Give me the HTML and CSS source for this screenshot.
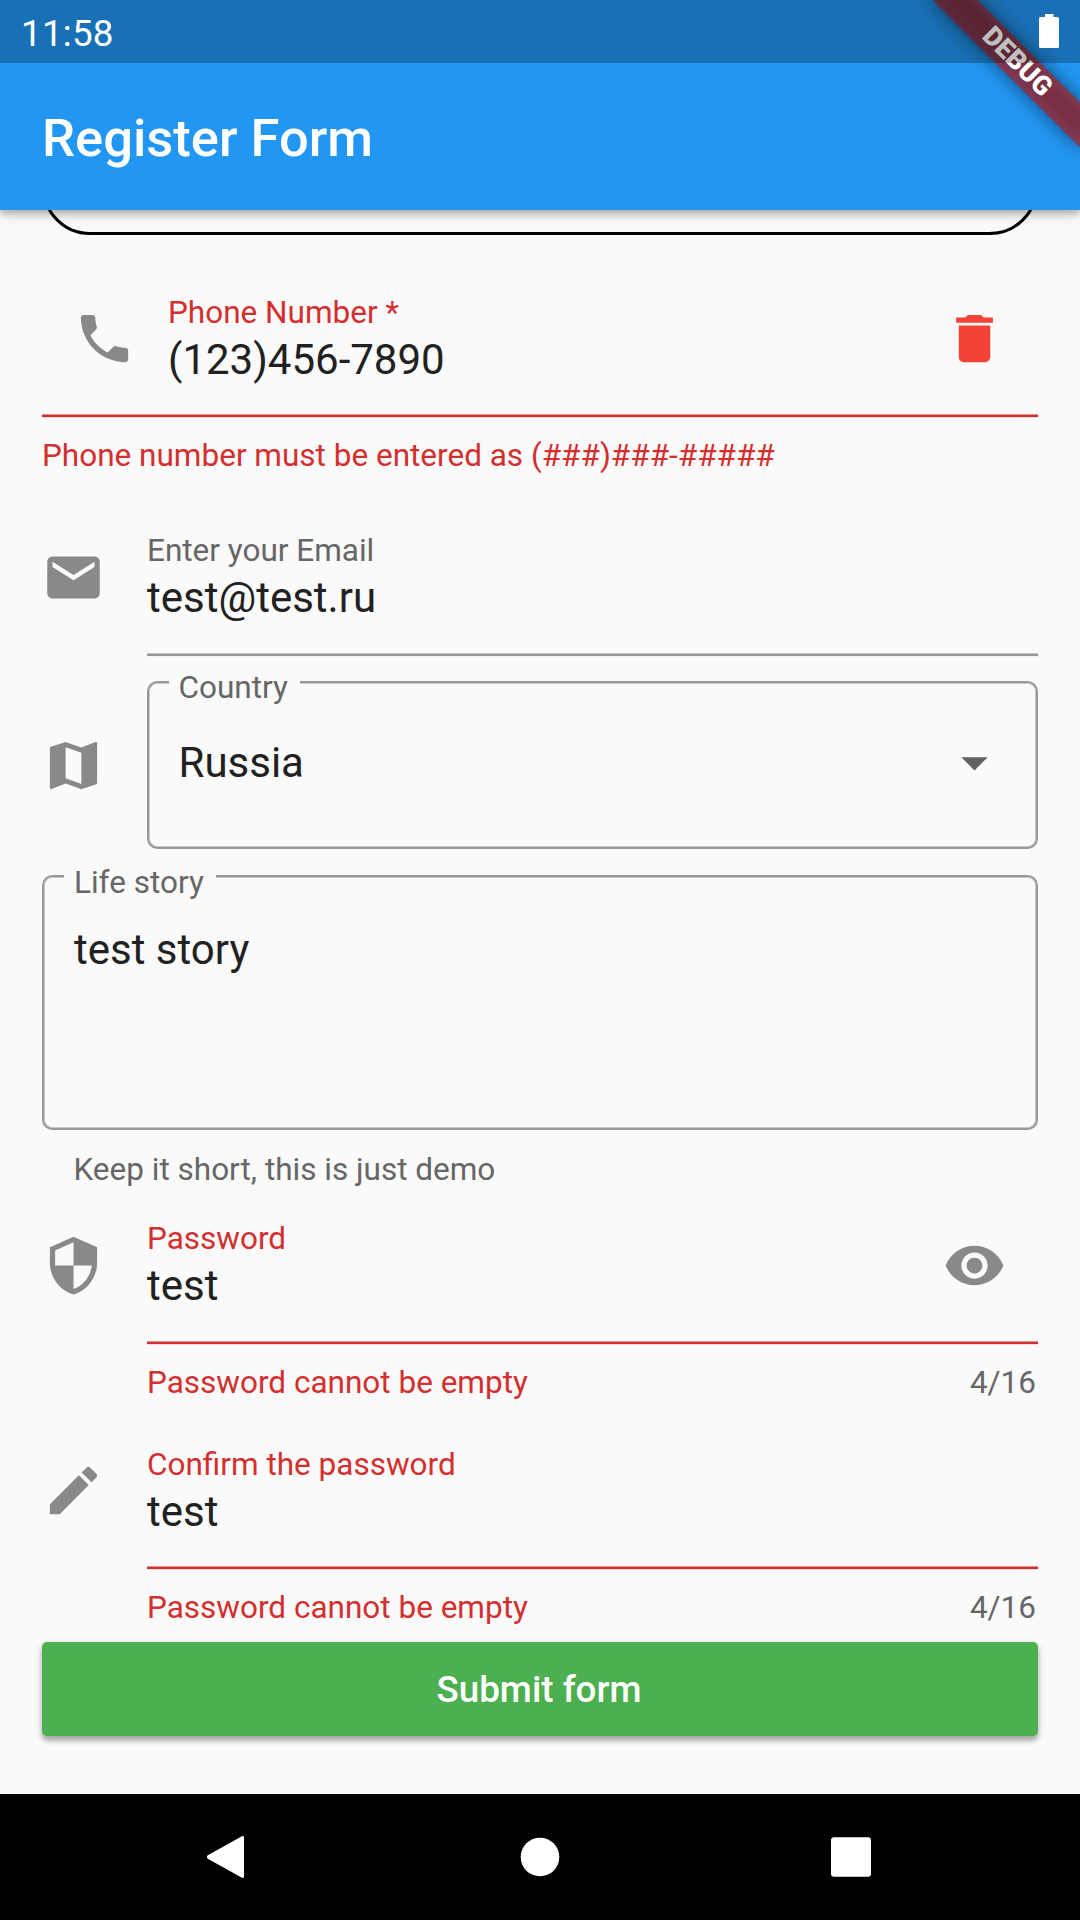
FILE: index.html
```html
<!DOCTYPE html>
<html lang="en">
<head>
<meta charset="utf-8">
<title>Register Form</title>
<link rel="stylesheet" href="styles.css">
</head>
<body>
<div class="screen">
  <header class="app-bar">
    <h1 class="app-title">Register Form</h1>
    <div class="banner-clip"><div class="banner"><span class="banner-text">DEBUG</span></div></div>
    <div class="status-bar">
      <span class="clock">11:58</span>
      <svg class="battery" viewBox="0 0 20 34"><path d="M6 0h8.500v3H18.500a1.500 1.500 0 0 1 1.500 1.500V32.500a1.500 1.500 0 0 1-1.500 1.500H1.500A1.500 1.500 0 0 1 0 32.500V4.500A1.500 1.500 0 0 1 1.500 3H6z"/></svg>
    </div>
  </header>

  <main class="form">
    <div class="rounded-field"></div>

    <section class="field phone error">
      <div class="row">
        <svg class="icon" viewBox="0 0 24 24"><path d="M6.620 10.790c1.440 2.830 3.760 5.140 6.590 6.590l2.200-2.200c.27-.27.67-.36 1.020-.24 1.120.37 2.330.57 3.570.57.55 0 1 .45 1 1V20c0 .55-.45 1-1 1-9.390 0-17-7.610-17-17 0-.55.45-1 1-1h3.500c.55 0 1 .45 1 1 0 1.250.2 2.450.57 3.570.11.35.03.74-.25 1.020l-2.200 2.200z"/></svg>
        <div class="texts"><div class="label">Phone Number *</div><div class="value">(123)456-7890</div></div>
        <svg class="icon delete" viewBox="0 0 24 24"><path d="M6 19c0 1.100.9 2 2 2h8c1.100 0 2-.9 2-2V7H6v12zM19 4h-3.500l-1-1h-5l-1 1H5v2h14V4z"/></svg>
      </div>
      <div class="underline"></div>
      <div class="support"><span>Phone number must be entered as (###)###-#####</span></div>
    </section>

    <section class="with-icon email">
      <svg class="icon" viewBox="0 0 24 24"><path d="M20 4H4c-1.100 0-1.990.9-1.990 2L2 18c0 1.100.9 2 2 2h16c1.100 0 2-.9 2-2V6c0-1.100-.9-2-2-2zm0 4l-8 5-8-5V6l8 5 8-5v2z"/></svg>
      <div class="field">
        <div class="row"><div class="texts"><div class="label">Enter your Email</div><div class="value">test@test.ru</div></div></div>
        <div class="underline"></div>
      </div>
    </section>

    <section class="with-icon country">
      <svg class="icon" viewBox="0 0 24 24"><path d="M20.500 3l-.16.03L15 5.100 9 3 3.360 4.900c-.21.07-.36.25-.36.48V20.500c0 .28.22.5.5.5l.16-.03L9 18.900l6 2.100 5.640-1.900c.21-.07.36-.25.36-.48V3.500c0-.28-.22-.5-.5-.5zM15 19l-6-2.110V5l6 2.110V19z"/></svg>
      <div class="outline select">
        <div class="label notch">Country</div>
        <div class="value">Russia</div>
        <svg class="icon arrow" viewBox="0 0 24 24"><path d="M7 10l5 5 5-5z"/></svg>
      </div>
    </section>

    <section class="story">
      <div class="outline area"><div class="label notch">Life story</div><div class="value">test story</div></div>
      <div class="helper">Keep it short, this is just demo</div>
    </section>

    <section class="with-icon password">
      <svg class="icon" viewBox="0 0 24 24"><path d="M12 1L3 5v6c0 5.550 3.840 10.740 9 12 5.160-1.260 9-6.450 9-12V5l-9-4zm0 10.990h7c-.53 4.120-3.280 7.790-7 8.940V12H5V6.300l7-3.110v8.800z"/></svg>
      <div class="field error">
        <div class="row">
          <div class="texts"><div class="label">Password</div><div class="value">test</div></div>
          <svg class="icon eye" viewBox="0 0 24 24"><path d="M12 4.500C7 4.500 2.730 7.610 1 12c1.730 4.390 6 7.500 11 7.500s9.270-3.110 11-7.500c-1.730-4.390-6-7.500-11-7.500zM12 17c-2.760 0-5-2.240-5-5s2.240-5 5-5 5 2.240 5 5-2.240 5-5 5zm0-8c-1.660 0-3 1.340-3 3s1.340 3 3 3 3-1.340 3-3-1.340-3-3-3z"/></svg>
        </div>
        <div class="underline"></div>
        <div class="support"><span>Password cannot be empty</span><span class="counter">4/16</span></div>
      </div>
    </section>

    <section class="with-icon confirm">
      <svg class="icon" viewBox="0 0 24 24"><path d="M3 17.250V21h3.750L17.810 9.940l-3.750-3.750L3 17.250zM20.710 7.040c.39-.39.39-1.020 0-1.410l-2.340-2.340c-.39-.39-1.020-.39-1.410 0l-1.830 1.830 3.750 3.750 1.830-1.830z"/></svg>
      <div class="field error">
        <div class="row"><div class="texts"><div class="label">Confirm the password</div><div class="value">test</div></div></div>
        <div class="underline"></div>
        <div class="support"><span>Password cannot be empty</span><span class="counter">4/16</span></div>
      </div>
    </section>

    <button class="submit" type="button">Submit form</button>
  </main>

  <nav class="nav-bar">
    <svg class="nav-icon back" viewBox="0 0 48 48"><path d="M6.800 22.300L40.500 3.400Q43 2.300 43 4.500V43.500Q43 45.700 40.500 44.600L6.800 25.700Q4.800 24 6.800 22.300z"/></svg>
    <svg class="nav-icon" viewBox="0 0 48 48"><circle cx="24" cy="24" r="19.300"/></svg>
    <svg class="nav-icon" viewBox="0 0 48 48"><rect x="4" y="4.200" width="40" height="39.600" rx="3"/></svg>
  </nav>
</div>
</body>
</html>
```
FILE: styles.css
```css
* { box-sizing: border-box; }

body {
  margin: 0;
  font-family: Roboto, sans-serif;
  color: #212121;
}

.screen {
  display: flex;
  flex-direction: column;
  width: 1080px;
  height: 1920px;
  background: #fafafa;
  overflow: hidden;
}

/* App bar, with the status bar and debug ribbon lying over it */
.app-bar {
  position: relative;
  z-index: 1;
  flex: none;
  height: 210px;
  padding: 65px 42px 0;
  display: flex;
  align-items: center;
  background: #2196f3;
  box-shadow: 0 4px 10px rgba(0, 0, 0, .2), 0 1px 14px rgba(0, 0, 0, .12), 0 3px 6px rgba(0, 0, 0, .1);
}

.app-title {
  margin: 0;
  font-size: 52.5px;
  line-height: 62px;
  font-weight: 500;
  color: #fff;
}

.status-bar {
  position: absolute;
  inset: 0 0 auto;
  height: 63px;
  padding: 0 21px;
  display: flex;
  justify-content: space-between;
  background: rgba(0, 0, 0, .25);
}

.clock {
  padding-top: 12px;
  font-size: 36.75px;
  line-height: 43px;
  letter-spacing: .25px;
  color: #fff;
}

.battery {
  width: 20px;
  height: 34px;
  margin-top: 14px;
  fill: #fff;
}

.banner-clip {
  position: absolute;
  inset: 0;
  overflow: hidden;
}

.banner {
  position: absolute;
  left: 912px;
  top: 46px;
  width: 210px;
  height: 32px;
  transform: rotate(45deg);
}

.banner::before {
  content: "";
  position: absolute;
  inset: 0;
  background: rgba(0, 0, 0, .5);
  filter: blur(9.5px);
}

.banner-text {
  position: absolute;
  inset: 0;
  background: rgba(183, 28, 28, .627);
  color: #fff;
  font-size: 26.78px;
  line-height: 31px;
  font-weight: 900;
  text-align: center;
}

/* Form */
.form {
  flex: 1;
  padding: 0 42px;
}

.rounded-field {
  height: 120px;
  margin-top: -95px;
  border: 3px solid #000;
  border-radius: 48px;
}

.icon {
  flex: none;
  width: 63px;
  height: 63px;
  fill: #898989;
}

.with-icon {
  display: flex;
  gap: 42px;
}

.field { flex: 1; }

.row {
  display: flex;
  height: 121px;
}

.texts { flex: 1; }

.label,
.support,
.helper {
  font-size: 31.5px;
  line-height: 37px;
  color: #666;
}

.value {
  font-size: 42px;
  line-height: 49px;
}

.texts .value { margin-top: 4px; }

.underline {
  height: 4px;
  background: linear-gradient(#c4c4c4 1px, #979797 1px 3px, #f1f1f1 3px);
}

.error .underline {
  background: linear-gradient(#e59494 1px, #d32f2f 1px 3px, #f5dada 3px);
}

.error .label,
.error .support { color: #d32f2f; }

.support {
  display: flex;
  justify-content: space-between;
  margin-top: 19px;
}

.error .support .counter {
  padding-right: 2px;
  color: #666;
}

.phone { margin-top: 59px; }
.phone .row { height: 120px; padding: 0 32px 0 31px; }
.phone .texts { padding-left: 32px; }
.phone .icon { margin-top: 13px; }
.phone .delete { fill: #f44336; }

.email { margin-top: 58px; }
.email > .icon { margin-top: 14px; }

.outline {
  position: relative;
  flex: 1;
  border: 2px solid #989898;
  border-radius: 10.5px;
  box-shadow: inset 0 0 0 1px #c8c8c8;
}

.notch {
  position: absolute;
  left: 20px;
  top: -14px;
  padding: 0 12px 0 9.5px;
  background: #fafafa;
}

.country { margin-top: 24px; }
.country > .icon { margin-top: 53px; }

.select {
  display: flex;
  justify-content: space-between;
  height: 168px;
  padding: 55px 30px 0 29.5px;
}

.select .arrow {
  margin-top: -7px;
  fill: #616161;
}

.story { margin-top: 26px; }

.area {
  height: 255px;
  padding: 48px 30px 0;
}

.area .notch {
  top: -13px;
  padding-left: 10px;
}

.helper {
  margin-top: 21px;
  padding-left: 31.5px;
}

.password { margin-top: 32px; }
.password .icon { margin-top: 14px; }
.password .eye { margin-right: 32px; }

.confirm { margin-top: 45px; }
.confirm .icon { margin-top: 13px; }
.confirm .row { height: 120px; }

.submit {
  display: block;
  width: 100%;
  height: 94px;
  margin-top: 16px;
  padding: 1px 2px 0 0;
  border: 0;
  border-radius: 5px;
  background: #4caf50;
  box-shadow: 0 5px 5px rgba(0, 0, 0, .26), 0 2px 8px rgba(0, 0, 0, .14);
  color: #fff;
  font: 500 36.75px/93px Roboto, sans-serif;
}

/* System navigation */
.nav-bar {
  flex: none;
  height: 126px;
  display: flex;
  justify-content: center;
  align-items: center;
  gap: 263px;
  background: #000;
}

.nav-icon {
  width: 48px;
  height: 48px;
  fill: #fff;
}

.nav-icon.back {
  margin: 0 4px 0 -4px;
}
```
